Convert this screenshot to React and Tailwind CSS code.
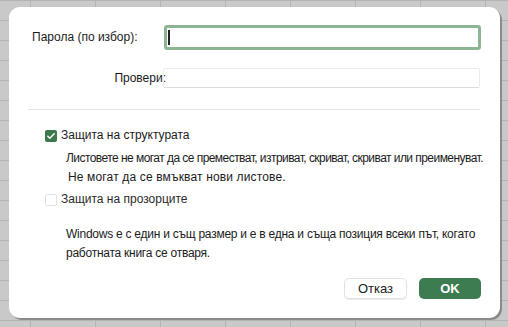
import React from 'react';

const CheckIcon = () => (
  <svg viewBox="0 0 12 12" className="w-[10px] h-[10px]" fill="none">
    <path d="M2.2 6.3l2.4 2.4 5.2-5.4" stroke="white" strokeWidth="1.8" strokeLinecap="round" strokeLinejoin="round" />
  </svg>
);

const App = () => {
  return (
    <div
      className="w-[508px] h-[327px] overflow-hidden bg-[#c9c9c9] bg-[linear-gradient(to_right,#b3b3b3_1px,transparent_1px),linear-gradient(to_bottom,#b3b3b3_1px,transparent_1px)] bg-[size:65px_20px] bg-[position:30px_0px] pl-[9px] pt-[7px]"
      style={{ fontFamily: '"Liberation Sans", Arial, sans-serif' }}
    >
      <div className="w-[491px] h-[311px] bg-white rounded-[11px] shadow-[2px_2px_0_#8a8a8a] flex flex-col text-[12px] leading-[15px] text-[#1b1b1b]">
        {/* password */}
        <div className="shrink-0 flex items-center mt-[18px] pl-[23px]">
          <span className="w-[132px]">Парола (по избор):</span>
          <div className="w-[317px] h-[25px] rounded-[3px] border-[3px] border-[#8db593] flex items-center pl-[1px]">
            <div className="w-[1.5px] h-[15px] bg-[#222]" />
          </div>
        </div>

        {/* verify */}
        <div className="shrink-0 flex items-center mt-[18px]">
          <span className="w-[157px] text-right">Провери:</span>
          <div className="ml-[-3px] w-[317px] h-[20px] rounded-[2px] border border-[#ececec] border-b-[#dcdcdc]" />
        </div>

        <div className="shrink-0 mt-[21px] ml-[19px] w-[452px] h-px bg-[#e3e3e3]" />

        {/* structure */}
        <div className="shrink-0 flex items-center mt-[18px] pl-[36px]">
          <div className="w-[12px] h-[12px] rounded-[2px] bg-[#3c7a4d] flex items-center justify-center">
            <CheckIcon />
          </div>
          <span className="ml-[4px]">Защита на структурата</span>
        </div>
        <div className="shrink-0 pl-[57px] mt-[6px] leading-[19px]">
          <div className="tracking-[-0.55px]">Листовете не могат да се преместват, изтриват, скриват, скриват или преименуват.</div>
          <div className="pl-[2px] tracking-[0.15px]">Не могат да се вмъкват нови листове.</div>
        </div>

        {/* windows */}
        <div className="shrink-0 flex items-center mt-[5px] pl-[36px]">
          <div className="w-[12px] h-[12px] rounded-[2px] border border-[#e2e2e2] bg-white" />
          <span className="ml-[4px] text-[#2a2a2a]">Защита на прозорците</span>
        </div>
        <div className="shrink-0 pl-[57px] mt-[18px] leading-[19px]">
          <div className="tracking-[-0.25px]">Windows е с един и същ размер и е в една и съща позиция всеки път, когато</div>
          <div className="tracking-[-0.25px]">работната книга се отваря.</div>
        </div>

        {/* buttons */}
        <div className="shrink-0 flex justify-end mt-auto mb-[19px] pr-[19px] gap-[12px]">
          <button className="w-[63px] h-[21px] rounded-[5px] bg-white border border-[#e2e2e2] shadow-[0_1px_1px_rgba(0,0,0,0.08)] text-[13px] text-[#1b1b1b] flex items-center justify-center">
            Отказ
          </button>
          <button className="w-[62px] h-[21px] rounded-[5px] bg-[#3d7b50] text-white font-bold text-[13px] flex items-center justify-center">
            OK
          </button>
        </div>
      </div>
    </div>
  );
};

export default App;
